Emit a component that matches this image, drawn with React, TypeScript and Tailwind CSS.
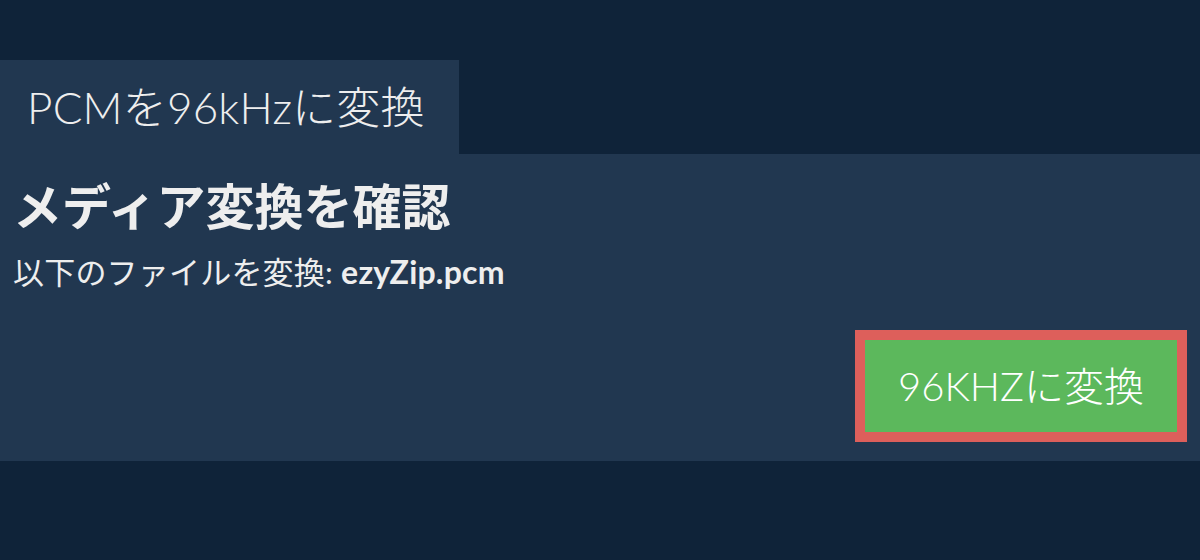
export default function App() {
  const font = { fontFamily: 'Lato, "Noto Sans CJK JP", sans-serif' };
  return (
    <div className="w-[1200px] h-[560px] bg-[#0f2339] flex flex-col" style={font}>
      <div className="h-[60px]" />
      <div className="flex">
        <div className="w-[459px] h-[94px] bg-[#213750] flex items-center pl-[27px] text-[44px] font-light text-[#eeeeee] leading-none tracking-[0.2px]">
          PCMを96kHzに変換
        </div>
      </div>
      <div className="h-[307px] bg-[#213750] flex flex-col px-[13px] pt-[16px]">
        <h1 className="text-[49px] font-bold text-[#eeeeee] leading-[72px]">メディア変換を確認</h1>
        <p className="text-[31px] text-[#eeeeee] leading-[44px] mt-[8px] tracking-[0.2px]">
          以下のファイルを変換: <b className="font-bold text-[32px]">ezyZip.pcm</b>
        </p>
        <div className="flex justify-end mt-auto mb-[19px]">
          <button className="w-[332px] h-[112px] bg-[#5cb85c] border-[10px] border-[#dd5f5b] text-white text-[40px] font-light leading-none">
            96KHZに変換
          </button>
        </div>
      </div>
    </div>
  );
}
